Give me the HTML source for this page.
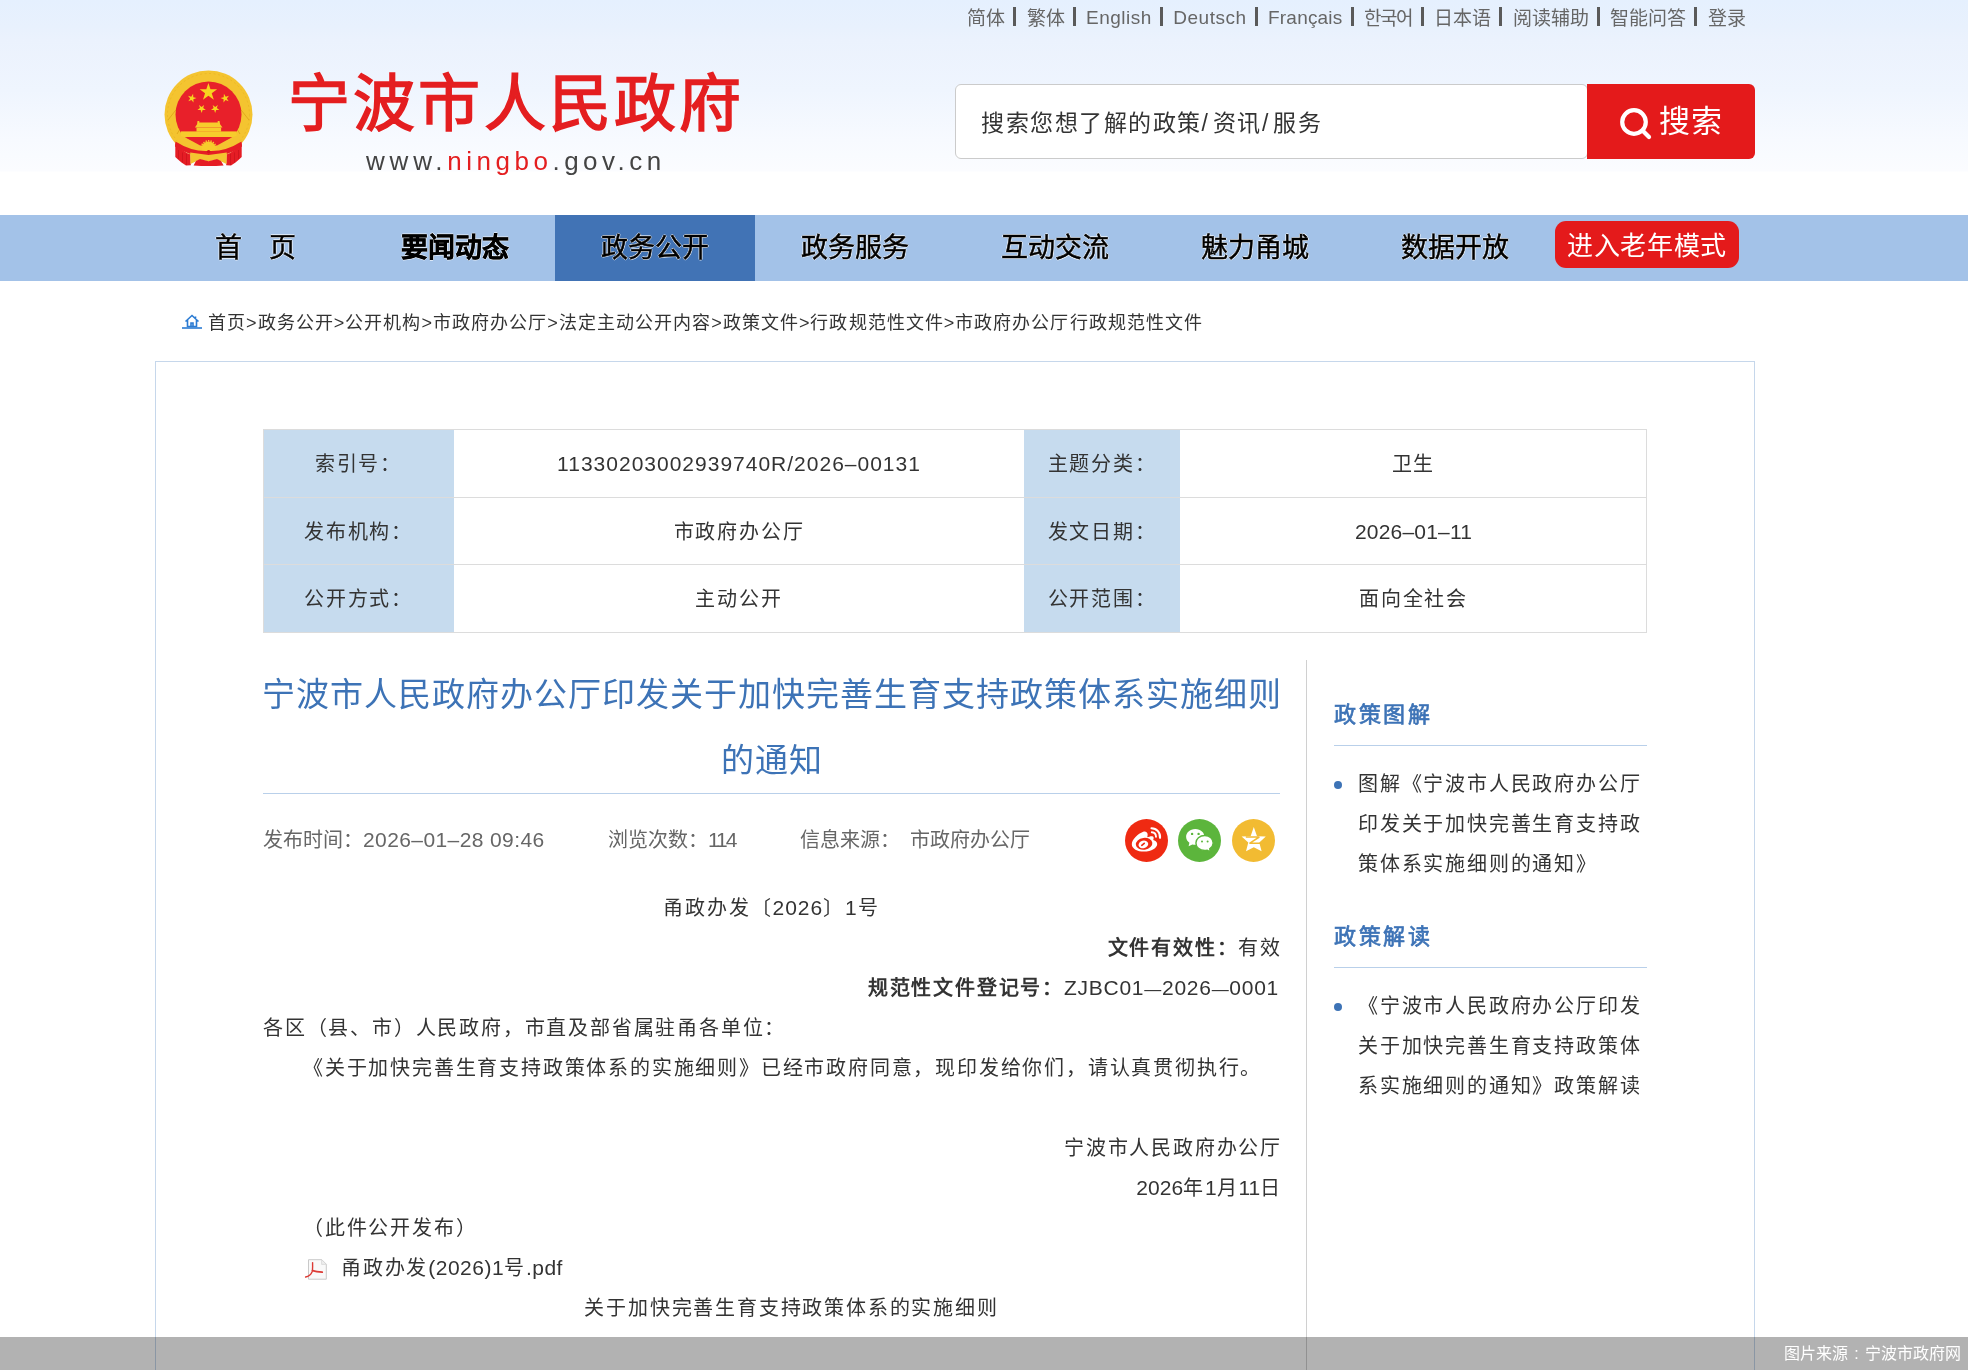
<!DOCTYPE html>
<html lang="zh-CN">
<head>
<meta charset="utf-8">
<style>
*{margin:0;padding:0;box-sizing:border-box;}
html,body{width:1968px;height:1370px;overflow:hidden;background:#fff;}
body{will-change:transform;font-family:"Liberation Sans",sans-serif;color:#333;position:relative;}
.a{position:absolute;white-space:nowrap;}
.hdr{position:absolute;left:0;top:0;width:1968px;height:215px;background:linear-gradient(#e5f0fe 0,#e8f1fd 26px,#ebf2fd 40px,#eff5fe 90px,#f7faff 140px,#fbfcff 171px,#fff 172px,#fff 215px);}
.toplinks{left:967px;top:7px;font-size:19px;color:#666;line-height:22px;}
.toplinks i{display:inline-block;width:3px;height:19px;background:#5a5a5a;margin:0 10.5px 0 8px;vertical-align:-1px;}
.toplinks u{text-decoration:none;letter-spacing:0.5px;position:relative;top:-1.5px;}
.logo-t{left:288px;top:60px;font-size:62px;font-weight:normal;color:#e41e20;line-height:90px;letter-spacing:3.2px;-webkit-text-stroke:1.6px #e41e20;text-shadow:0 0 3px #fff;}
.logo-u{left:366px;top:144px;font-size:26px;color:#444;letter-spacing:4.8px;line-height:34px;}
.logo-u b{color:#e41e20;font-weight:normal;}
.search{position:absolute;left:955px;top:84px;width:633px;height:75px;border:1px solid #cbcbcb;border-radius:6px;background:#fff;}
.ph{left:981px;top:103px;font-size:23px;color:#333;line-height:40px;letter-spacing:1.5px;}
.sbtn{position:absolute;left:1587px;top:84px;width:168px;height:75px;background:#e41a1b;border-radius:0 6px 6px 0;}
.sbtn-t{left:1659px;top:100px;font-size:31px;line-height:44px;color:#fff;letter-spacing:0.5px;}
.nav{position:absolute;left:0;top:215px;width:1968px;height:66px;background:#a3c2e8;}
.nv{top:215px;height:66px;width:200px;text-align:center;font-size:27px;line-height:66px;color:#000;-webkit-text-stroke:0.5px #000;text-shadow:1px 0 0.5px rgba(255,255,255,.8),-1px 0 0.5px rgba(255,255,255,.8),0 1px 0.5px rgba(255,255,255,.8),0 -1px 0.5px rgba(255,255,255,.8);padding-top:0;}
.nv.on{background:#4173b5;}
.old{left:1555px;top:221px;width:184px;height:47px;background:#e41a1b;border-radius:11px;color:#fff;font-size:26px;line-height:47px;text-align:center;padding-top:2px;letter-spacing:0.6px;}
.crumb{left:208px;top:308px;font-size:18px;line-height:30px;color:#333;letter-spacing:1.04px;}
.box{position:absolute;left:155px;top:361px;width:1600px;height:1100px;border:1px solid #c6d7eb;}
.tb{position:absolute;background:#c6dbee;}
.hl{position:absolute;height:1px;background:#dcdcdc;}
.vl{position:absolute;width:1px;background:#dcdcdc;}
.tc{font-size:20px;line-height:30px;color:#333;text-align:center;letter-spacing:1.8px;}
.title{left:258px;top:662px;width:1027px;text-align:center;font-size:33px;letter-spacing:1px;line-height:66px;color:#3d73b6;white-space:normal;}
.tline{position:absolute;left:263px;top:793px;width:1017px;height:1px;background:#b9d0ea;}
.meta{top:825px;font-size:20px;color:#666;line-height:30px;}
.sc{position:absolute;top:819px;width:43px;height:43px;border-radius:50%;}
.vline{position:absolute;left:1306px;top:660px;width:1px;height:720px;background:#d0d0d0;}
.bd{font-size:20px;line-height:40px;color:#333;letter-spacing:1.8px;}
.sh{left:1334px;font-size:22px;font-weight:normal;-webkit-text-stroke:0.7px #3d73b6;letter-spacing:2.7px;color:#3d73b6;line-height:40px;}
.sl{position:absolute;left:1334px;width:313px;height:1px;background:#b9d0ea;}
.dot{position:absolute;left:1334px;width:8px;height:8px;border-radius:50%;background:#3d73b6;}
.si{left:1358px;width:290px;font-size:20px;line-height:40px;color:#333;letter-spacing:1.8px;white-space:normal;}
.n{font-size:21px;letter-spacing:1px;}
.bar{position:absolute;left:0;top:1337px;width:1968px;height:33px;background:rgba(0,0,0,.3);}
.bar-t{right:7px;top:1339px;font-size:16px;color:#fff;line-height:30px;}
</style>
</head>
<body>
<div class="hdr"></div>
<div class="a toplinks">简体<i></i>繁体<i></i><u>English</u><i></i><u>Deutsch</u><i></i><u style="letter-spacing:0.2px">Français</u><i></i><span style="letter-spacing:-0.8px">한국어</span><i></i>日本语<i></i>阅读辅助<i></i>智能问答<i></i>登录</div>

<svg class="a" style="left:155px;top:62px" width="108" height="110" viewBox="0 0 108 110">
 <circle cx="53.5" cy="52.5" r="44" fill="#f4c430"/>
 <circle cx="53.5" cy="52.5" r="41" fill="none" stroke="#e8b526" stroke-width="0.8" stroke-dasharray="2 2.5"/>
 <path d="M13 58 L24 44 M94 58 L83 44 M22 72 L28 62 M85 72 L79 62" stroke="#e2a91c" stroke-width="1"/>
 <circle cx="53.5" cy="52.5" r="33" fill="#e8202a"/>
 <polygon fill="#f7d51f" points="53.40,21.00 55.47,27.36 62.15,27.36 56.74,31.29 58.81,37.64 53.40,33.71 47.99,37.64 50.06,31.29 44.65,27.36 51.33,27.36"/>
 <polygon fill="#f7d51f" points="38.09,31.86 38.27,35.19 41.49,36.06 38.37,37.26 38.55,40.59 36.45,38.00 33.33,39.19 35.15,36.39 33.04,33.79 36.27,34.66"/>
 <polygon fill="#f7d51f" points="68.91,31.86 70.73,34.66 73.96,33.79 71.85,36.39 73.67,39.19 70.55,38.00 68.45,40.59 68.63,37.26 65.51,36.06 68.73,35.19"/>
 <polygon fill="#f7d51f" points="49.12,43.00 48.19,46.05 50.81,47.89 47.61,47.94 46.68,51.00 45.64,47.98 42.44,48.03 44.99,46.11 43.95,43.09 46.57,44.92"/>
 <polygon fill="#f7d51f" points="57.68,43.00 60.23,44.92 62.85,43.09 61.81,46.11 64.36,48.03 61.16,47.98 60.12,51.00 59.19,47.94 55.99,47.89 58.61,46.05"/>
 <path fill="#f7cc2c" d="M42.5 59 h1.8 v1.6 h18.4 v-1.6 h1.8 l0.6 3.2 l2.4 3.4 h-27.6 l2.2-3.4 z"/>
 <rect x="41.5" y="65.6" width="24.6" height="4" fill="#f7cc2c"/>
 <rect x="26" y="69.4" width="55.7" height="5.6" fill="#f7cc2c"/>
 <path fill="#f4c430" d="M24 73.5 L31 75.5 L53.6 86 L76 75.5 L83 73.5 L85 80 L53.6 91 L22 80 Z"/>
 <path fill="#e8202a" d="M30.4 75.6 H76.6 L62 83.6 H45.2 Z"/>
 <circle cx="53.6" cy="86.5" r="7" fill="#f7cc2c"/>
 <circle cx="53.6" cy="86.5" r="7.6" fill="none" stroke="#f7cc2c" stroke-width="1.6" stroke-dasharray="1.3 1.2"/>
 <path fill="#e51d25" d="M20.5 79.5 Q37 90 53.6 89 Q70 90 86.5 79.5 L87 84.5 Q70 95.5 53.6 94 Q37 95.5 20 84.5 Z"/>
 <circle cx="53.6" cy="89.6" r="1.7" fill="#d3141c"/>
 <path fill="#e51d25" d="M20.3 81 Q28 90 35.5 92.5 L35.8 103.2 L31 103.4 L26.5 100.5 L23 97.5 L20.3 95 Z"/>
 <path fill="#e51d25" d="M86.7 81 Q79 90 71.5 92.5 L71.2 103.2 L76 103.4 L80.5 100.5 L84 97.5 L86.7 95 Z"/>
 <path d="M23.5 88 V97 M27.5 90.5 V100.5 M31.5 92 V103 M83.5 88 V97 M79.5 90.5 V100.5 M75.5 92 V103" stroke="#c8121b" stroke-width="0.7"/>
 <path fill="#f4c430" d="M35.2 90.5 L53.6 93 L71.8 90.5 L71.5 102 L62 97.5 L53.6 99.5 L45 97.5 L35.5 102 Z"/>
 <path fill="#e51d25" d="M38.6 103.4 L41 99 L45 97 L53.6 99.2 L62 97 L66 99 L68.6 103.4 Q53.6 104.6 38.6 103.4 Z"/>
</svg>

<div class="a logo-t">宁波市人民政府</div>
<div class="a logo-u">www.<span style="letter-spacing:4.5px"><b>ningbo</b>.gov.cn</span></div>

<div class="search"></div>
<div class="a ph">搜索您想了解的政策<span style="letter-spacing:5px">/</span>资讯<span style="letter-spacing:5px">/</span>服务</div>
<div class="sbtn"></div>
<svg class="a" style="left:1617px;top:105px" width="38" height="38" viewBox="0 0 38 38"><circle cx="17" cy="17" r="11.8" fill="none" stroke="#fff" stroke-width="4.2"/><path d="M27 27 L32 32" stroke="#fff" stroke-width="4.2" stroke-linecap="round"/></svg>
<div class="a sbtn-t">搜索</div>

<div class="nav"></div>
<div class="a nv" style="left:155px">首<span style="display:inline-block;width:27px"></span>页</div>
<div class="a nv" style="left:355px;font-weight:bold">要闻动态</div>
<div class="a nv on" style="left:555px">政务公开</div>
<div class="a nv" style="left:755px">政务服务</div>
<div class="a nv" style="left:955px">互动交流</div>
<div class="a nv" style="left:1155px">魅力甬城</div>
<div class="a nv" style="left:1355px">数据开放</div>
<div class="a old">进入老年模式</div>

<svg class="a" style="left:181px;top:313px" width="22" height="16" viewBox="0 0 22 16"><path d="M4.5 8.5 L11 2.5 L17.5 8.5 M6.5 7 V13.5 H15.5 V7 M10 13.5 V10 H12 V13.5 M14.5 3.5 V6" fill="none" stroke="#2b7bd3" stroke-width="1.6"/><path d="M1 15 H21" stroke="#2b7bd3" stroke-width="1.6"/></svg>
<div class="a crumb">首页&gt;政务公开&gt;公开机构&gt;市政府办公厅&gt;法定主动公开内容&gt;政策文件&gt;行政规范性文件&gt;市政府办公厅行政规范性文件</div>

<div class="box"></div>
<!-- info table -->
<div class="tb" style="left:263px;top:429px;width:191px;height:204px"></div>
<div class="tb" style="left:1024px;top:429px;width:156px;height:204px"></div>
<div class="hl" style="left:263px;top:429px;width:1384px"></div>
<div class="hl" style="left:263px;top:497px;width:1384px"></div>
<div class="hl" style="left:263px;top:564px;width:1384px"></div>
<div class="hl" style="left:263px;top:632px;width:1384px"></div>
<div class="vl" style="left:263px;top:429px;height:204px"></div>
<div class="vl" style="left:1646px;top:429px;height:204px"></div>
<div class="a tc" style="left:263px;top:449px;width:191px">索引号：</div>
<div class="a tc" style="left:454px;top:449px;width:570px"><span class="n" id="t1">11330203002939740R/2026–00131</span></div>
<div class="a tc" style="left:1024px;top:449px;width:156px">主题分类：</div>
<div class="a tc" style="left:1180px;top:449px;width:467px">卫生</div>
<div class="a tc" style="left:263px;top:517px;width:191px">发布机构：</div>
<div class="a tc" style="left:454px;top:517px;width:570px">市政府办公厅</div>
<div class="a tc" style="left:1024px;top:517px;width:156px">发文日期：</div>
<div class="a tc" style="left:1180px;top:517px;width:467px"><span class="n" id="t2" style="letter-spacing:0.2px">2026–01–11</span></div>
<div class="a tc" style="left:263px;top:584px;width:191px">公开方式：</div>
<div class="a tc" style="left:454px;top:584px;width:570px">主动公开</div>
<div class="a tc" style="left:1024px;top:584px;width:156px">公开范围：</div>
<div class="a tc" style="left:1180px;top:584px;width:467px">面向全社会</div>

<div class="a title">宁波市人民政府办公厅印发关于加快完善生育支持政策体系实施细则<br>的通知</div>
<div class="tline"></div>
<div class="a meta" style="left:263px">发布时间：<span class="n" id="m1" style="letter-spacing:0.4px">2026–01–28 09:46</span></div>
<div class="a meta" style="left:608px">浏览次数：<span class="n" id="m2" style="letter-spacing:-2px">114</span></div>
<div class="a meta" style="left:800px">信息来源：</div>
<div class="a meta" style="left:910px">市政府办公厅</div>

<svg class="a" style="left:1125px;top:819px" width="43" height="43" viewBox="0 0 43 43">
 <circle cx="21.5" cy="21.5" r="21.5" fill="#ef2a12"/>
 <path fill="#fff" d="M18.2 12.8 C13 14.8 6.8 20.5 6.8 25.2 C6.8 29.8 12.5 32.6 19 32.6 C26.5 32.6 32.2 29 32.2 25 C32.2 22.4 29.8 21.3 28.2 20.9 C28.9 19.3 29.1 17.6 27.3 17.2 C25.9 16.9 23.6 17.8 22.2 18.3 C22.7 16.6 23.1 14.5 21.6 13.2 C20.8 12.5 19.6 12.3 18.2 12.8 Z"/>
 <ellipse cx="19.1" cy="24.8" rx="8.3" ry="5.9" fill="#ef2a12" transform="rotate(-8 19.1 24.8)"/>
 <ellipse cx="18.4" cy="25.4" rx="4.9" ry="3.8" fill="#fff" transform="rotate(-15 18.4 25.4)"/>
 <path d="M16.8 26.3 L19.2 24.4" stroke="#ef2a12" stroke-width="1.7" stroke-linecap="round"/>
 <path d="M26.5 9.2 A8.6 8.6 0 0 1 35 18.8" fill="none" stroke="#fff" stroke-width="2.1" stroke-linecap="round"/>
 <path d="M26.8 13.3 A4.6 4.6 0 0 1 31 17.8" fill="none" stroke="#fff" stroke-width="1.9" stroke-linecap="round"/>
</svg>
<svg class="a" style="left:1178px;top:819px" width="43" height="43" viewBox="0 0 43 43">
 <circle cx="21.5" cy="21.5" r="21.5" fill="#5cb53c"/>
 <path fill="#fff" d="M17.3 10 C11.8 10 8.1 13.8 8.1 17.8 C8.1 20.3 9.4 22.3 11.4 23.8 L10.6 27.2 L14.4 25.4 C15.3 25.6 16.3 25.8 17.3 25.8 C22.8 25.8 26.5 22 26.5 17.9 C26.5 13.8 22.8 10 17.3 10 Z"/>
 <circle cx="14.1" cy="14.9" r="1.2" fill="#5cb53c"/>
 <circle cx="20.6" cy="14.9" r="1.2" fill="#5cb53c"/>
 <path fill="#fff" stroke="#5cb53c" stroke-width="1.4" d="M26.8 16.5 C21.6 16.5 17.9 20 17.9 24 C17.9 28 21.6 31.5 26.8 31.5 C27.6 31.5 28.4 31.4 29.2 31.2 L32.4 32.9 L31.7 29.8 C33.9 28.3 35.2 26.3 35.2 24 C35.2 20 31.8 16.5 26.8 16.5 Z"/>
 <circle cx="24" cy="22.6" r="1" fill="#5cb53c"/>
 <circle cx="29.6" cy="22.6" r="1" fill="#5cb53c"/>
</svg>
<svg class="a" style="left:1232px;top:819px" width="43" height="43" viewBox="0 0 43 43">
 <circle cx="21.5" cy="21.5" r="21.5" fill="#f2bb32"/>
 <path fill="#fff" d="M21.8 8 L25 17.2 L33.8 17.5 L27.3 23.6 L29.6 32.2 L21.8 28.2 L14 32.2 L16.3 23.6 L9.6 17.5 L18.6 17.2 Z"/>
 <path d="M13.8 18 L27.3 18 L17.5 24.3 L28.2 24.3" fill="none" stroke="#f2bb32" stroke-width="1.5" stroke-linejoin="bevel"/>
</svg>

<div class="vline"></div>

<div class="a bd" style="left:263px;top:888px;width:1017px;text-align:center">甬政办发〔<span class="n" id="b1">2026</span>〕<span class="n">1</span>号</div>
<div class="a bd" style="left:263px;top:928px;width:1019px;text-align:right"><b>文件有效性：</b>有效</div>
<div class="a bd" style="left:263px;top:968px;width:1016px;text-align:right"><b>规范性文件登记号：</b><span class="n" id="b2" style="letter-spacing:0.73px">ZJBC01<span style="font-size:17px">—</span>2026<span style="font-size:17px">—</span>0001</span></div>
<div class="a bd" style="left:263px;top:1008px">各区（县、市）人民政府，市直及部省属驻甬各单位：</div>
<div class="a bd" style="left:303px;top:1048px">《关于加快完善生育支持政策体系的实施细则》已经市政府同意，现印发给你们，请认真贯彻执行。</div>
<div class="a bd" style="left:263px;top:1128px;width:1019px;text-align:right">宁波市人民政府办公厅</div>
<div class="a bd" style="left:263px;top:1168px;width:1019px;text-align:right"><span class="n" style="letter-spacing:0">2026</span>年<span class="n" style="letter-spacing:0">1</span>月<span class="n" style="letter-spacing:0">11</span>日</div>
<div class="a bd" style="left:303px;top:1208px">（此件公开发布）</div>
<svg class="a" style="left:303px;top:1256px" width="28" height="28" viewBox="0 0 28 28">
 <path d="M5.5 3.7 H18.8 L23.3 8.2 V23.2 H5.5 Z" fill="#f9f9f9" stroke="#c9c9c9" stroke-width="1"/>
 <path d="M18.6 3.8 V8.4 H23.2" fill="#eee" stroke="#d6d6d6" stroke-width="0.8"/>
 <path d="M9.6 6.6 C9.5 10 10 13.4 9 16 C7.9 18.6 5.2 20.4 2.6 21" fill="none" stroke="#dc3b35" stroke-width="1.4" stroke-linecap="round"/>
 <path d="M9.6 14.6 C12.6 15.6 16 16 19.2 16.2" fill="none" stroke="#dc3b35" stroke-width="1.8" stroke-linecap="round"/>
</svg>
<div class="a bd" style="left:341px;top:1248px">甬政办发<span class="n" id="b3" style="letter-spacing:0.5px">(2026)1</span>号<span class="n" style="letter-spacing:0.5px">.pdf</span></div>
<div class="a bd" style="left:263px;top:1288px;width:1057px;text-align:center">关于加快完善生育支持政策体系的实施细则</div>

<div class="a sh" style="top:695px">政策图解</div>
<div class="sl" style="top:745px"></div>
<div class="dot" style="top:781px"></div>
<div class="a si" style="top:764px">图解《宁波市人民政府办公厅印发关于加快完善生育支持政策体系实施细则的通知》</div>
<div class="a sh" style="top:917px">政策解读</div>
<div class="sl" style="top:967px"></div>
<div class="dot" style="top:1003px"></div>
<div class="a si" style="top:986px">《宁波市人民政府办公厅印发关于加快完善生育支持政策体系实施细则的通知》政策解读</div>

<div class="bar"></div>
<div class="a bar-t">图片来源<span style="display:inline-block;width:17px;text-align:center">:</span>宁波市政府网</div>
</body>
</html>
